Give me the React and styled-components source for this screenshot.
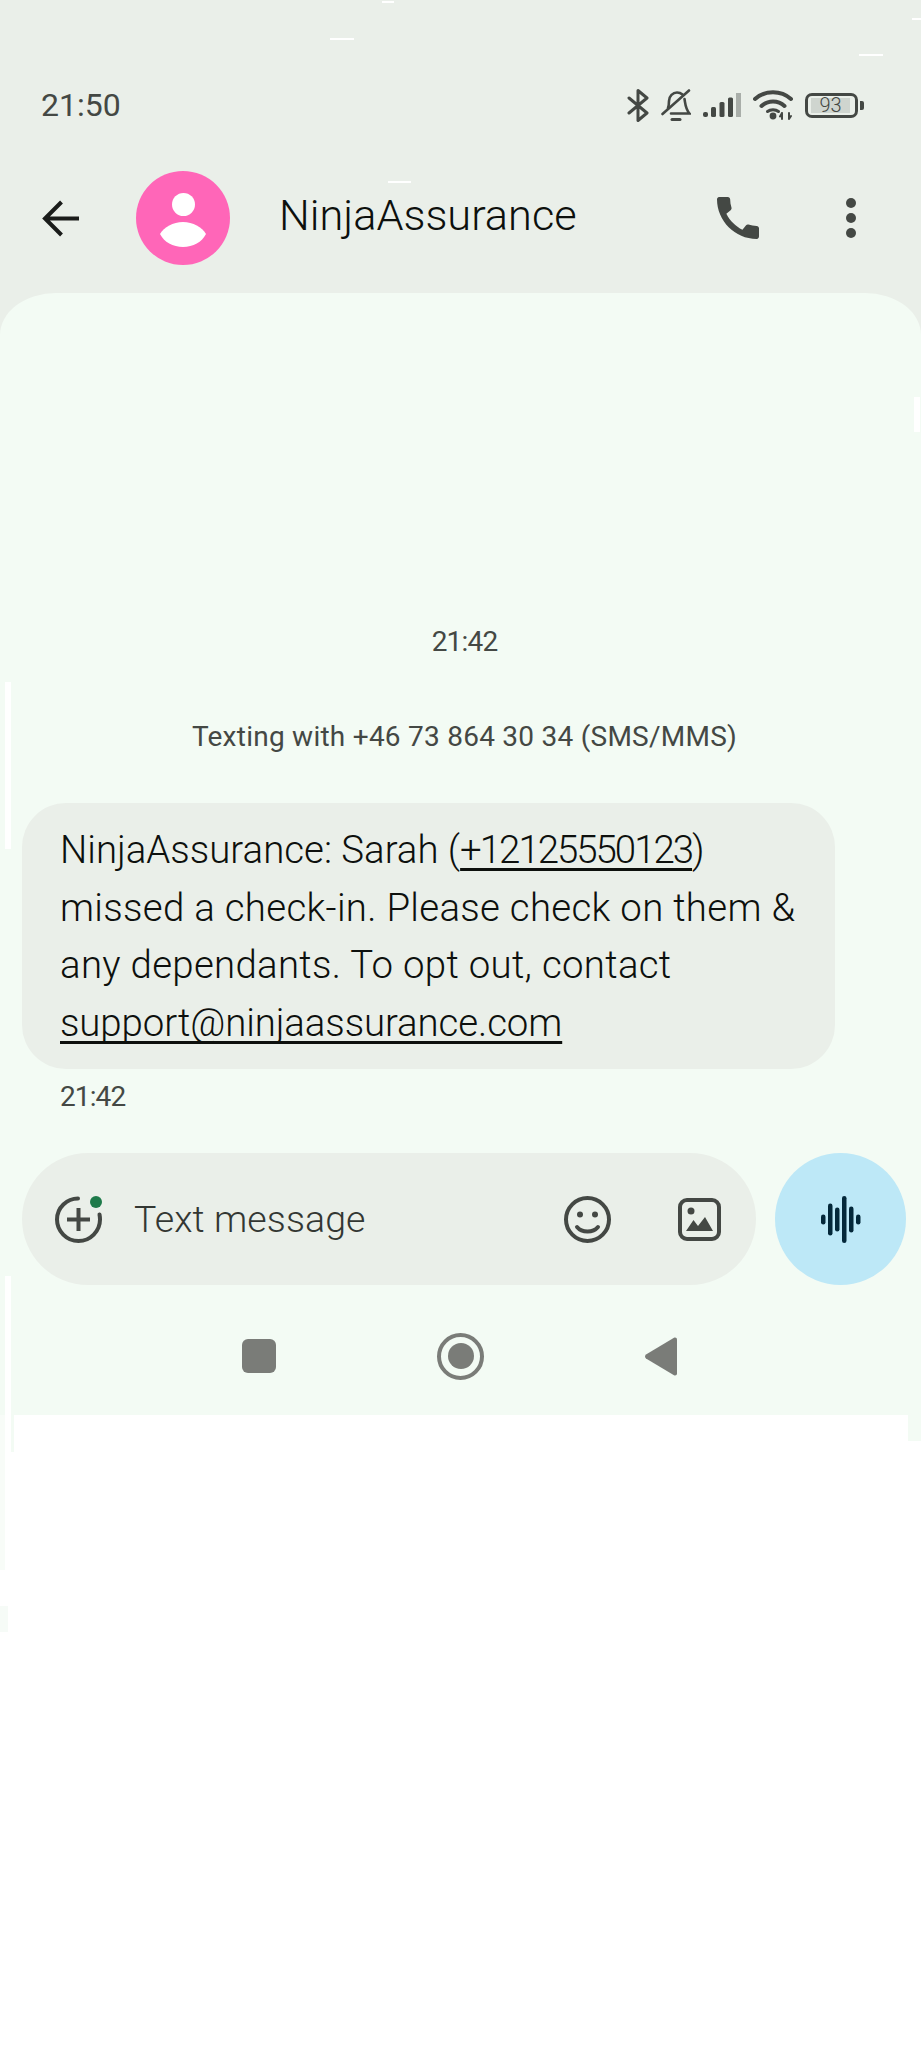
import React from 'react'
import styled, { createGlobalStyle } from 'styled-components'

const INK = '#444844'
const PANEL = '#f3fbf4'

const GlobalStyle = createGlobalStyle`
html, body {
    margin: 0;
    padding: 0;
    background: #fff;
}
* {
    box-sizing: border-box;
}
`

const Screen = styled.div`
position: relative;
width: 921px;
height: 2048px;
overflow: hidden;
background: #eaefe9;
font-family: Roboto, "Noto Sans", sans-serif;
`

const StatusBar = styled.div`
display: flex;
align-items: center;
justify-content: space-between;
height: 40px;
margin-top: 85px;
padding: 0 57px 0 41px;
`

const Clock = styled.div`
font-size: 32px;
line-height: 40px;
color: ${INK};
`

const StatusIcons = styled.div`
display: flex;
align-items: center;
gap: 12px;
`

const Battery = styled.div`
display: flex;
align-items: center;
gap: 2px;
`

const BatteryShell = styled.div`
display: flex;
align-items: center;
justify-content: center;
width: 53px;
height: 25px;
padding: 0 5px 0 3px;
border: 3px solid ${INK};
border-radius: 7px;
`

const BatteryLevel = styled.div`
flex: 1;
height: 15px;
background: #cfd5cf;
font-size: 20px;
font-weight: 300;
line-height: 15px;
text-align: center;
color: ${INK};
`

const BatteryNub = styled.div`
width: 4px;
height: 9px;
border-radius: 0 2px 2px 0;
background: ${INK};
`

const AppBar = styled.div`
display: flex;
align-items: center;
margin-top: 46px;
padding: 0 65px 28px 42px;
`

const Avatar = styled.div`
display: flex;
flex: none;
width: 94px;
height: 94px;
margin-left: 57px;
border-radius: 50%;
background: #ff66b8;
`

const Title = styled.div`
flex: 1;
margin: -4px 0 0 49px;
font-size: 43.3px;
font-weight: 350;
line-height: 50px;
color: #0d100d;
`

const MoreDots = styled.div`
display: flex;
flex-direction: column;
gap: 5px;
margin-left: 87px;
`

const Dot = styled.span`
width: 10px;
height: 10px;
border-radius: 50%;
background: ${INK};
`

const Panel = styled.div`
height: 1122px;
padding-top: 329px;
border-radius: 56px 56px 0 0 / 42px 42px 0 0;
background: ${PANEL};
`

const Stamp = styled.div`
padding-left: 8px;
font-size: 28px;
letter-spacing: -0.8px;
line-height: 40px;
text-align: center;
color: ${INK};
`

const Notice = styled.div`
margin-top: 55px;
padding-left: 8px;
font-size: 28px;
letter-spacing: 0.25px;
line-height: 40px;
text-align: center;
color: ${INK};
`

const Bubble = styled.div`
width: 813px;
height: 266px;
margin: 46px 0 0 22px;
padding: 18px 20px 18px 38px;
border-radius: 44px;
background: #eaefe9;
font-size: 38.4px;
font-weight: 350;
letter-spacing: 0.3px;
line-height: 57.5px;
color: #0d100d;
`

const Lead = styled.span`
letter-spacing: 0;
`

const BubbleLink = styled.span`
letter-spacing: ${p => p.$tight}px;
text-decoration: underline;
text-decoration-thickness: 3px;
text-decoration-skip-ink: none;
text-underline-offset: 5px;
`

const MessageTime = styled.div`
margin: 8px 0 0 60px;
font-size: 28px;
letter-spacing: -0.9px;
line-height: 40px;
color: ${INK};
`

const Composer = styled.div`
display: flex;
gap: 19px;
margin: 36px 0 0 22px;
`

const Field = styled.div`
display: flex;
align-items: center;
width: 734px;
height: 132px;
padding: 0 35px 0 33px;
border-radius: 66px;
background: #eaefe9;
`

const Placeholder = styled.div`
flex: 1;
margin-left: 32px;
font-size: 37.5px;
font-weight: 350;
letter-spacing: 0.1px;
color: #333733;
`

const ImageSlot = styled.div`
display: flex;
margin-left: 67px;
`

const SendButton = styled.div`
display: flex;
align-items: center;
justify-content: center;
width: 131px;
height: 132px;
border-radius: 50%;
background: #bde8f7;
`

const NavBar = styled.div`
display: flex;
align-items: center;
gap: 161px;
height: 130px;
padding: 12px 0 0 242px;
`

const NavSquare = styled.div`
width: 34px;
height: 34px;
border-radius: 6px;
background: #7a7c78;
`

const NavHome = styled.div`
display: flex;
align-items: center;
justify-content: center;
width: 47px;
height: 47px;
border: 4px solid #7a7c78;
border-radius: 50%;
`

const NavHomeCore = styled.div`
width: 26px;
height: 26px;
border-radius: 50%;
background: #7a7c78;
`

const Sheet = styled.div`
height: 633px;
background: #fff;
`

// compression smears that sit over the screenshot
const Smear = styled.div`
position: absolute;
left: ${p => p.$x}px;
top: ${p => p.$y}px;
width: ${p => p.$w}px;
height: ${p => p.$h}px;
background: ${p => p.$c || '#fff'};
`

const smears = [
    { x: 382, y: 1, w: 12, h: 2 },
    { x: 330, y: 38, w: 24, h: 2 },
    { x: 912, y: 18, w: 9, h: 2 },
    { x: 859, y: 54, w: 24, h: 2 },
    { x: 388, y: 181, w: 23, h: 2 },
    { x: 5, y: 682, w: 6, h: 167 },
    { x: 914, y: 397, w: 6, h: 35 },
    { x: 5, y: 1276, w: 6, h: 294 },
    { x: 908, y: 1415, w: 13, h: 26, c: PANEL },
    { x: 11, y: 1415, w: 3, h: 37, c: PANEL },
    { x: 0, y: 1415, w: 5, h: 155, c: '#f8fcf8' },
    { x: 0, y: 1606, w: 8, h: 26, c: '#f6fbf7' }
]

const BackIcon = () => <svg width="37" height="37" viewBox="0 0 37 37" fill="none" stroke="#1a1c1a" strokeWidth="4">
    <path d="M37 18.5H4M19.5 2L3 18.5L19.5 35" />
</svg>

const PhoneIcon = () => <svg width="42" height="42" viewBox="3 3 18 18" fill={INK}>
    <path d="M20.01 15.38c-1.23 0-2.42-.2-3.53-.56-.35-.12-.74-.03-1.01.24l-1.57 1.97c-2.83-1.35-5.48-3.9-6.89-6.83l1.95-1.66c.27-.28.35-.67.24-1.02-.37-1.11-.56-2.3-.56-3.53 0-.54-.45-.99-.99-.99H4.19C3.65 3 3 3.24 3 3.99 3 13.28 10.73 21 20.01 21c.71 0 .99-.63.99-1.18v-3.45c0-.54-.45-.99-.99-.99z" />
</svg>

const BluetoothIcon = () => <svg width="22" height="33" viewBox="0 0 22 33" fill="none" stroke={INK} strokeWidth="3" strokeLinejoin="round" strokeLinecap="round">
    <path d="M2 9L20 24L11 31.5V1.5L20 9L2 24" />
</svg>

const BellOffIcon = () => <svg width="30" height="32" viewBox="0 0 30 32" fill="none" stroke={INK} strokeWidth="2.6" strokeLinecap="round">
    <path d="M7 19C8 16 8 14 8 12C8 7 12 3.5 16 3.5C18 3.5 20 4.2 21.5 5.5" />
    <path d="M23.5 10C24.5 16 24.5 20 28.5 24.5H10" />
    <path d="M1.5 25L28 1.5" />
    <path d="M11 30.5H19" strokeWidth="3" />
</svg>

const SignalIcon = () => <svg width="38" height="24" viewBox="0 0 38 24" fill={INK}>
    <rect x="0" y="19" width="5" height="5" rx="2" />
    <rect x="8" y="14" width="5" height="10" rx="1.5" />
    <rect x="16.5" y="9" width="5" height="15" rx="1.5" />
    <rect x="25" y="4.5" width="5" height="19.5" rx="1.5" />
    <rect x="33" y="0" width="5" height="24" fill="#a9aea9" />
</svg>

const WifiIcon = () => <svg width="40" height="30" viewBox="0 0 40 30" fill="none" stroke={INK} strokeWidth="4" strokeLinecap="round">
    <path d="M2 9C12 0 28 0 38 9" />
    <path d="M8.5 16C15 10 25 10 31.5 16" />
    <path d="M14.5 21.5C17.5 19 22.5 19 25.5 21.5" strokeWidth="3" />
    <circle cx="20" cy="26" r="3.4" fill={INK} stroke="none" />
    <path d="M29 23V29M27 26.5L29 23M36 23V29M36 29L38 26" strokeWidth="2" />
</svg>

const Icon47 = ({ children }) => <svg width="47" height="47" viewBox="0 0 47 47" fill="none">{children}</svg>

const AddIcon = () => <Icon47>
    <path d="M23 2.5C12 2.5 2 11.5 2 23.5C2 35 11.5 45 23.5 45C35.5 45 45 35 45 23.5C45 21.5 44.8 20 44.5 18.5" stroke={INK} strokeWidth="4" strokeLinecap="round" />
    <path d="M12 23.5H35M23.5 12V35" stroke={INK} strokeWidth="4" />
    <circle cx="41" cy="6" r="6" fill="#1e7a4a" />
</Icon47>

const SmileIcon = () => <Icon47>
    <circle cx="23.5" cy="23.5" r="21.5" stroke={INK} strokeWidth="4" />
    <circle cx="16" cy="18.5" r="3" fill={INK} />
    <circle cx="31" cy="18.5" r="3" fill={INK} />
    <path d="M13 31C18 37 29 37 34 31" stroke={INK} strokeWidth="4" strokeLinecap="round" />
</Icon47>

const ImageIcon = () => <svg width="43" height="43" viewBox="0 0 43 43" fill="none">
    <rect x="2" y="2" width="39" height="39" rx="7" stroke={INK} strokeWidth="4" />
    <circle cx="13" cy="13" r="3.5" fill={INK} />
    <path d="M8 33L15.5 22L20 28L27 19L35 33Z" fill={INK} />
</svg>

const VoiceIcon = () => <svg width="40" height="47" viewBox="0 0 40 47" fill="#04283a">
    <rect x="0" y="18.5" width="4.5" height="10" rx="2.25" />
    <rect x="7" y="7.5" width="4.5" height="32" rx="2.25" />
    <rect x="14" y="11.5" width="4.5" height="24" rx="2.25" />
    <rect x="21" y="0" width="4.5" height="47" rx="2.25" />
    <rect x="28" y="10.5" width="4.5" height="26" rx="2.25" />
    <rect x="35" y="18.5" width="4.5" height="10" rx="2.25" />
</svg>

const AvatarGlyph = () => <svg width="94" height="94" viewBox="0 0 94 94" fill="#fff">
    <circle cx="47.5" cy="33.5" r="11.5" />
    <path d="M24 63C28 56 37 51 47 51C57 51 66 56 70 63C66 71 57 76 47 76C37 76 28 71 24 63Z" />
</svg>

const NavBackIcon = () => <svg width="32" height="39" viewBox="0 0 32 39" fill="#7a7c78">
    <path d="M29 0.8C30.5 0 32 1 32 2.5V36.5C32 38 30.5 39 29 38.2L1 21.5C-0.3 20.5 -0.3 18.5 1 17.5Z" />
</svg>

const App = () => {
    return <Screen>
        <GlobalStyle />
        <StatusBar>
            <Clock>21:50</Clock>
            <StatusIcons>
                <BluetoothIcon />
                <BellOffIcon />
                <SignalIcon />
                <WifiIcon />
                <Battery>
                    <BatteryShell>
                        <BatteryLevel>93</BatteryLevel>
                    </BatteryShell>
                    <BatteryNub />
                </Battery>
            </StatusIcons>
        </StatusBar>
        <AppBar>
            <BackIcon />
            <Avatar><AvatarGlyph /></Avatar>
            <Title>NinjaAssurance</Title>
            <PhoneIcon />
            <MoreDots>
                <Dot />
                <Dot />
                <Dot />
            </MoreDots>
        </AppBar>
        <Panel>
            <Stamp>21:42</Stamp>
            <Notice>Texting with +46 73 864 30 34 (SMS/MMS)</Notice>
            <Bubble>
                <Lead>NinjaAssurance: Sarah (</Lead><BubbleLink $tight={-2}>+12125550123</BubbleLink>) missed a check-in. Please check on them &amp; any dependants. To opt out, contact <BubbleLink $tight={-0.1}>support@ninjaassurance.com</BubbleLink>
            </Bubble>
            <MessageTime>21:42</MessageTime>
            <Composer>
                <Field>
                    <AddIcon />
                    <Placeholder>Text message</Placeholder>
                    <SmileIcon />
                    <ImageSlot><ImageIcon /></ImageSlot>
                </Field>
                <SendButton><VoiceIcon /></SendButton>
            </Composer>
            <NavBar>
                <NavSquare />
                <NavHome><NavHomeCore /></NavHome>
                <NavBackIcon />
            </NavBar>
        </Panel>
        <Sheet />
        {smears.map(s => <Smear key={`${s.x}-${s.y}`} $x={s.x} $y={s.y} $w={s.w} $h={s.h} $c={s.c} />)}
    </Screen>
}

export default App
